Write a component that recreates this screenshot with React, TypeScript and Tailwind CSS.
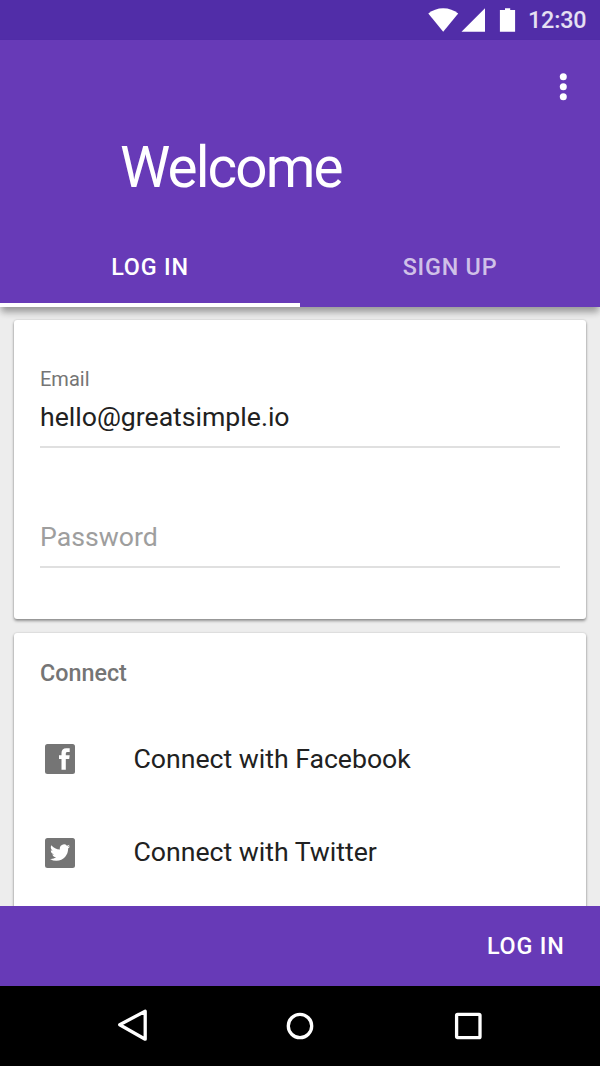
import type { ReactNode } from "react";

function StatusBar() {
  return (
    <div className="flex h-10 items-center bg-[#512da8] pl-[428px]">
      <svg width="102" height="40" viewBox="0 0 102 40" fill="#fff" className="shrink-0">
        <path d="M0.300 13.600C4.400 10.200 9.500 8.300 15.200 8.300s10.900 1.900 15 5.300L15.200 31.700Z" />
        <path d="M57 8.300V31.700H33.500Z" />
        <path d="M71.900 10H77V8.300H82.200V10H87.100V31.700H71.900Z" />
      </svg>
      <span className="-ml-[2px] pt-px text-[23.33px] leading-[39px] font-medium tracking-[-0.150px] text-white/85">12:30</span>
    </div>
  );
}

function Header() {
  return (
    <header className="relative z-10 flex h-[267px] flex-col bg-[#673ab7] text-white shadow-[0_6px_7px_-1px_rgba(0,0,0,0.36)]">
      <div className="flex h-[93px] justify-end pt-[32px] pr-[33px]">
        <svg width="8" height="30" viewBox="0 0 8 30" fill="#fff">
          <circle cx="4.300" cy="4.700" r="3.500" />
          <circle cx="4.300" cy="14.700" r="3.500" />
          <circle cx="4.300" cy="24.700" r="3.500" />
        </svg>
      </div>
      <h1 className="h-[70px] pl-[120px] text-[56.67px] leading-[70px] tracking-[-1.900px]">Welcome</h1>
      <nav className="grid flex-1 grid-cols-2 text-center text-[23.33px] font-medium tracking-[0.800px]">
        <div className="border-b-4 border-white pt-[44px] leading-[40px]">LOG IN</div>
        <div className="pt-[44px] leading-[40px] text-white/70">SIGN UP</div>
      </nav>
    </header>
  );
}

function Card({ className, children }: { className: string; children: ReactNode }) {
  return (
    <section className={`mx-[14px] rounded-[3px] bg-white px-[26px] shadow-[0_2px_3px_rgba(0,0,0,0.38),0_0_2px_rgba(0,0,0,0.18)] ${className}`}>
      {children}
    </section>
  );
}

function ConnectRow({ icon, label }: { icon: ReactNode; label: string }) {
  return (
    <div className="flex h-[93px] items-center pl-[5px]">
      {icon}
      <span className="ml-[58.500px] pb-[2px] text-[26.67px] leading-[40px] tracking-[-0.020px]">{label}</span>
    </div>
  );
}

function FacebookIcon() {
  return (
    <svg width="30" height="30" viewBox="0 0 30 30" className="-mt-px shrink-0">
      <rect width="30" height="30" rx="2.500" fill="#757575" />
      <path d="M16.500 25.700V15H14V11.300h2.500V9c0-3 1.700-4.700 4.700-4.700h3.500V8h-2c-1.400 0-1.900.6-1.900 1.700v1.600h3.900l-.5 3.700h-3.400v10.700Z" fill="#fff" />
    </svg>
  );
}

function TwitterIcon() {
  return (
    <svg width="30" height="30" viewBox="0 0 30 30" className="shrink-0">
      <rect width="30" height="30" rx="2.500" fill="#757575" />
      <g transform="translate(5 4.500) scale(.84)">
        <path d="M23.950 4.570a10 10 0 0 1-2.820.770 4.960 4.960 0 0 0 2.160-2.720c-.95.560-2 .960-3.130 1.180a4.920 4.920 0 0 0-8.380 4.480C7.690 8.100 4.070 6.130 1.640 3.160a4.820 4.820 0 0 0-.67 2.480c0 1.710.870 3.210 2.190 4.100a4.900 4.900 0 0 1-2.230-.62v.06a4.920 4.920 0 0 0 3.950 4.830 5 5 0 0 1-2.210.080 4.940 4.940 0 0 0 4.600 3.420A9.870 9.870 0 0 1 0 19.540a13.990 13.990 0 0 0 7.560 2.210c9.050 0 14-7.500 14-13.980 0-.21 0-.42-.02-.63a9.940 9.940 0 0 0 2.410-2.570Z" fill="#fff" />
      </g>
    </svg>
  );
}

function NavigationBar() {
  return (
    <div className="flex h-20 items-center justify-between bg-black px-[117px]">
      <svg width="30" height="40" viewBox="0 0 30 40" fill="none" stroke="#fff" strokeWidth="3.300" strokeLinejoin="round">
        <path d="M28.200 5.200V33.200L2.700 18.700Z" />
      </svg>
      <svg width="30" height="30" viewBox="0 0 30 30" fill="none" stroke="#fff" strokeWidth="3.300">
        <circle cx="15" cy="15" r="11.700" />
      </svg>
      <svg width="30" height="30" viewBox="0 0 30 30" fill="none" stroke="#fff" strokeWidth="3.300" strokeLinejoin="round">
        <rect x="3.600" y="3.300" width="23.400" height="23.400" rx="1" />
      </svg>
    </div>
  );
}

export default function App() {
  return (
    <div className="flex h-[1066px] w-[600px] flex-col overflow-hidden bg-[#ededed] font-['Roboto',sans-serif] text-[#212121]">
      <StatusBar />
      <Header />
      <main className="min-h-0 flex-1 overflow-hidden">
        <Card className="mt-[13px] h-[299px] pt-[43px]">
          <div className="h-[85px] border-b-2 border-[#e0e0e0]">
            <div className="h-[33px] text-[20px] leading-[32px] text-[#757575]">Email</div>
            <div className="text-[26.67px] leading-[43px] tracking-[-0.020px]">hello@greatsimple.io</div>
          </div>
          <div className="h-[120px] border-b-2 border-[#e0e0e0] pt-[69px] text-[26.67px] leading-[40px] text-[#9e9e9e]">Password</div>
        </Card>
        <Card className="mt-[14px] h-[299px] pt-[20px]">
          <h2 className="h-[60px] text-[23.33px] leading-[40px] font-medium text-[#757575]">Connect</h2>
          <ConnectRow icon={<FacebookIcon />} label="Connect with Facebook" />
          <ConnectRow icon={<TwitterIcon />} label="Connect with Twitter" />
        </Card>
      </main>
      <footer className="relative z-10 flex h-20 items-center justify-end bg-[#673ab7] pr-[35.500px] text-[23.33px] font-medium tracking-[0.800px] text-white">
        LOG IN
      </footer>
      <NavigationBar />
    </div>
  );
}
